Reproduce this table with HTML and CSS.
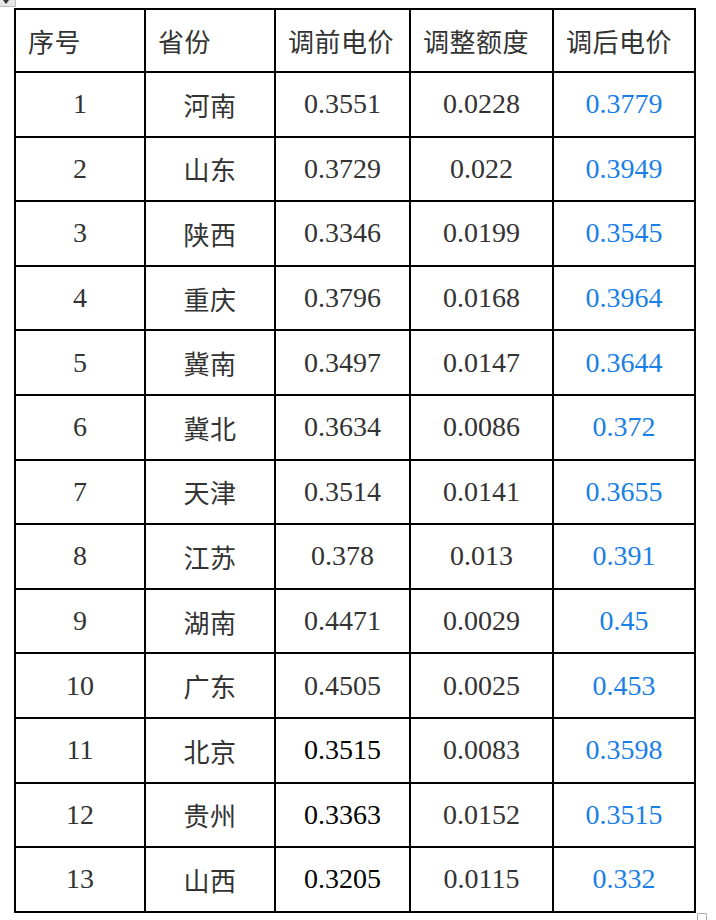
FILE: index.html
```html
<!DOCTYPE html>
<html lang="zh">
<head>
<meta charset="utf-8">
<title>电价调整</title>
<link rel="stylesheet" href="styles.css">
</head>
<body>
<div class="handle-tl"><span class="arrow"></span></div>
<div class="sheet">
<table class="price">
  <colgroup>
    <col class="c1"><col class="c2"><col class="c3"><col class="c4"><col class="c5">
  </colgroup>
  <thead>
    <tr><th>序号</th><th>省份</th><th>调前电价</th><th>调整额度</th><th>调后电价</th></tr>
  </thead>
  <tbody>
    <tr><td class="num">1</td><td class="prov">河南</td><td class="num">0.3551</td><td class="num">0.0228</td><td class="num blue">0.3779</td></tr>
    <tr><td class="num">2</td><td class="prov">山东</td><td class="num">0.3729</td><td class="num">0.022</td><td class="num blue">0.3949</td></tr>
    <tr><td class="num">3</td><td class="prov">陕西</td><td class="num">0.3346</td><td class="num">0.0199</td><td class="num blue">0.3545</td></tr>
    <tr><td class="num">4</td><td class="prov">重庆</td><td class="num">0.3796</td><td class="num">0.0168</td><td class="num blue">0.3964</td></tr>
    <tr><td class="num">5</td><td class="prov">冀南</td><td class="num">0.3497</td><td class="num">0.0147</td><td class="num blue">0.3644</td></tr>
    <tr><td class="num">6</td><td class="prov">冀北</td><td class="num">0.3634</td><td class="num">0.0086</td><td class="num blue">0.372</td></tr>
    <tr><td class="num">7</td><td class="prov">天津</td><td class="num">0.3514</td><td class="num">0.0141</td><td class="num blue">0.3655</td></tr>
    <tr><td class="num">8</td><td class="prov">江苏</td><td class="num">0.378</td><td class="num">0.013</td><td class="num blue">0.391</td></tr>
    <tr><td class="num">9</td><td class="prov">湖南</td><td class="num">0.4471</td><td class="num">0.0029</td><td class="num blue">0.45</td></tr>
    <tr><td class="num">10</td><td class="prov">广东</td><td class="num">0.4505</td><td class="num">0.0025</td><td class="num blue">0.453</td></tr>
    <tr><td class="num">11</td><td class="prov">北京</td><td class="num black">0.3515</td><td class="num">0.0083</td><td class="num blue">0.3598</td></tr>
    <tr><td class="num">12</td><td class="prov">贵州</td><td class="num black">0.3363</td><td class="num">0.0152</td><td class="num blue">0.3515</td></tr>
    <tr><td class="num">13</td><td class="prov">山西</td><td class="num black">0.3205</td><td class="num">0.0115</td><td class="num blue">0.332</td></tr>
  </tbody>
</table>
<div class="handle-br"></div>
</div>
</body>
</html>
```

FILE: styles.css
```css
html, body {
  margin: 0;
  padding: 0;
  background: #ffffff;
}

body {
  position: relative;
  width: 716px;
  height: 920px;
  overflow: hidden;
}

.sheet {
  position: relative;
  padding: 8px 0 0 14px;
}

.price {
  border-collapse: collapse;
  table-layout: fixed;
  width: 682px;
}

.c1 { width: 130px; }
.c2 { width: 130px; }
.c3 { width: 135px; }
.c4 { width: 143px; }
.c5 { width: 142px; }

.price th,
.price td {
  border: 2px solid #000;
  padding: 0;
  height: 62.6px;
  vertical-align: middle;
  color: #333;
}

.price thead th {
  height: 61px;
  text-align: left;
  padding-left: 12px;
  font-family: "Noto Sans CJK SC", "Noto Sans", sans-serif;
  font-weight: normal;
  font-size: 26px;
  letter-spacing: 0.5px;
}

.price tbody td {
  text-align: center;
}

.num {
  font-family: "Liberation Serif", "Times New Roman", serif;
  font-size: 28px;
}

.prov {
  font-family: "Noto Sans CJK SC", "Noto Sans", sans-serif;
  font-size: 26px;
  letter-spacing: 0.5px;
}

.price td.black { color: #000; }
.price td.blue { color: #1a7fe6; }

.handle-tl {
  position: absolute;
  left: 0;
  top: 0;
  width: 15px;
  height: 6px;
  background: #e6e6e6;
  border-right: 1px solid #bbb;
  border-bottom: 1px solid #bbb;
  z-index: 2;
}

.handle-tl .arrow {
  position: absolute;
  left: 3px;
  top: 0;
  width: 0;
  height: 0;
  border-left: 3px solid transparent;
  border-right: 3px solid transparent;
  border-top: 4px solid #333;
}

.handle-br {
  position: absolute;
  left: 697px;
  top: 913px;
  width: 8px;
  height: 8px;
  border: 1px solid #aaa;
  border-radius: 1px;
  background: #fff;
}
```
